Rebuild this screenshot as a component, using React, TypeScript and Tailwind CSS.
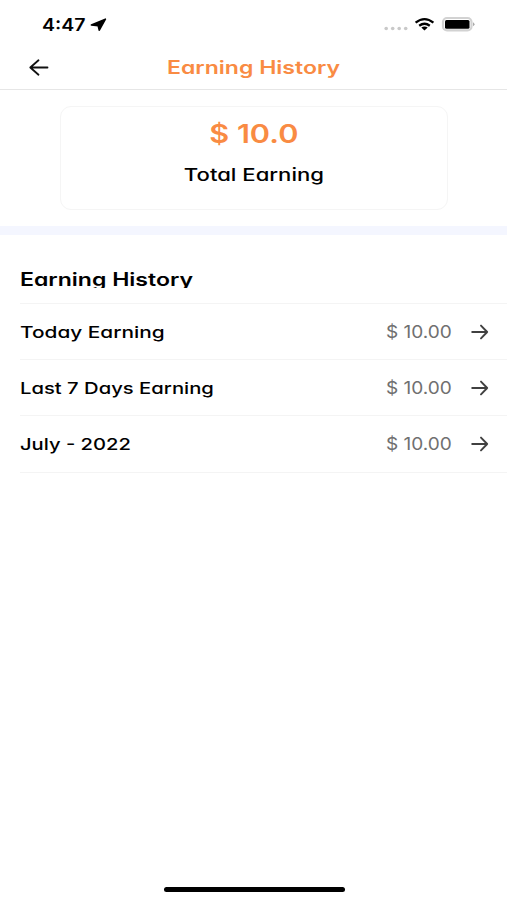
const rows = [
  { label: 'Today Earning', amount: '$ 10.00', stretch: 'scale-x-[1.262]' },
  { label: 'Last 7 Days Earning', amount: '$ 10.00', stretch: 'scale-x-[1.226]' },
  { label: 'July - 2022', amount: '$ 10.00', stretch: 'scale-x-[1.222]' },
];

const face = "font-['Inter','Liberation_Sans',sans-serif] [font-feature-settings:'cv11','ss03'] whitespace-nowrap";

function StatusBar() {
  return (
    <div className="flex h-[46px] items-start justify-between pt-[14px] pl-[42px] pr-[32px]">
      <div className="flex items-center">
        <span className="mt-px w-[43px] origin-left scale-x-[1.15] text-[17px] leading-5 font-semibold">4:47</span>
        <svg className="mt-[1px] ml-[5px]" width="17" height="14" viewBox="0 0 17 14">
          <path d="M15.4 1.2 9.3 12.2 8.2 7.8 1.4 7Z" stroke="#000" strokeWidth="1.6" strokeLinejoin="round" />
        </svg>
      </div>
      <svg className="mt-[1px]" width="91" height="20" viewBox="0 0 91 20">
        <g fill="#c9c9c9">
          <circle cx="2.2" cy="13.5" r="1.8" />
          <circle cx="8.7" cy="13.5" r="1.8" />
          <circle cx="15.2" cy="13.5" r="1.8" />
          <circle cx="21.7" cy="13.5" r="1.8" />
        </g>
        <g fill="none" stroke="#000" strokeWidth="2.3">
          <path d="M31.6 7.6Q40.5 .6 49.4 7.6" />
          <path d="M35.2 10.7Q40.5 6.8 45.8 10.7" />
        </g>
        <path d="M37.3 12.6Q40.5 10.6 43.7 12.6L40.5 15.4Z" />
        <rect x="59" y="3" width="28.5" height="12.4" rx="4" fill="#fff" stroke="#d2d2d2" strokeWidth="2.2" />
        <rect x="61" y="4.9" width="24.5" height="8.8" rx="1.5" />
        <path d="M89 7.2Q92 9.2 89 11.2Z" fill="#aaa" />
      </svg>
    </div>
  );
}

function ForwardArrow() {
  return (
    <svg className="shrink-0" width="18" height="16" viewBox="0 0 18 16" fill="none" stroke="#404040" strokeWidth="1.9" strokeLinecap="round" strokeLinejoin="round">
      <path d="M1.2 8h15M10 1.6 16.2 8 10 14.4" />
    </svg>
  );
}

export default function App() {
  return (
    <div className={`flex h-[900px] w-[507px] flex-col overflow-hidden bg-white text-black ${face}`}>
      <StatusBar />
      <header className="flex h-[44px] items-center border-b border-[#e6e6e6] pl-[29px]">
        <svg width="20" height="17" viewBox="0 0 20 17" fill="none" stroke="#111" strokeWidth="1.8" strokeLinecap="round" strokeLinejoin="round">
          <path d="M18.5 8.5H1.3M9.5 1.3 1.3 8.5 9.5 15.7" />
        </svg>
        <h1 className="ml-[118px] origin-left scale-x-[1.28] text-[18px] leading-6 font-semibold text-[#f98b43]">Earning History</h1>
      </header>
      <section className="flex h-[136px] justify-center pt-[16px]">
        <div className="flex h-[104px] w-[388px] flex-col items-center rounded-[11px] border border-[#f5f5f5] pt-[11px]">
          <p className="scale-x-[1.18] text-[26px] leading-8 font-semibold text-[#f98b43]">$ 10.0</p>
          <p className="mt-[13px] scale-x-[1.3] text-[17px] leading-6 font-medium">Total Earning</p>
        </div>
      </section>
      <div className="h-[9px] shrink-0 bg-[#f4f6ff]" />
      <main className="pl-[20px]">
        <div className="h-[68.5px] border-b border-[#f4f4f4] pt-[34px]">
          <h2 className="h-[18.5px] w-[150px] origin-left scale-x-[1.28] overflow-hidden text-[18px] leading-[22px] font-semibold">Earning History</h2>
        </div>
        {rows.map((row) => (
          <div key={row.label} className="flex h-[56.4px] items-center border-b border-[#f4f4f4] pt-[1px] pr-[18px]">
            <span className={`origin-left text-[16.5px] leading-6 font-medium ${row.stretch}`}>{row.label}</span>
            <span className="ml-auto mr-[19px] origin-right scale-x-[1.12] text-[17px] leading-6 text-[#707070]">{row.amount}</span>
            <ForwardArrow />
          </div>
        ))}
      </main>
      <div className="mt-auto mb-[8px] ml-[164px] h-[5px] w-[181px] shrink-0 rounded-full bg-black" />
    </div>
  );
}
